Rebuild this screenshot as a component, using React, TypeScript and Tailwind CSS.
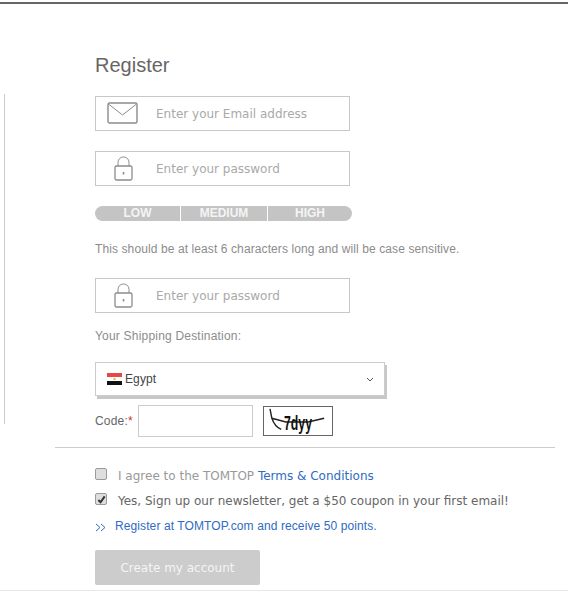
import React from "react";

// 入力欄（アイコン + プレースホルダー）
function Field({ icon, label, className }: { icon: React.ReactNode; label: string; className: string }) {
  return (
    <div className={`flex items-center w-[255px] h-[35px] border border-[#c8c8c8] ${className}`}>
      <div className="w-[60px] flex justify-center shrink-0">{icon}</div>
      <span className="text-[#a9a9a9] text-[12px] font-['DejaVu_Sans',sans-serif]">{label}</span>
    </div>
  );
}

function MailIcon() {
  return (
    <svg width="32" height="23" viewBox="0 0 32 23" fill="none" stroke="#8c8c8c" className="ml-[-6px]">
      <rect x="1" y="1" width="29" height="20" rx="1.5" strokeWidth="1.4" />
      <path d="M1.5 2 L15.5 13 L29.5 2" strokeWidth="1" />
    </svg>
  );
}

function LockIcon() {
  return (
    <svg width="20" height="25" viewBox="0 0 20 25" fill="none" stroke="#8c8c8c" className="ml-[-5px]">
      <rect x="1" y="10" width="17" height="14" rx="1.5" strokeWidth="1.3" />
      <path d="M4 10 V6.5 C4 3 6.5 1 9.5 1 C12.5 1 15 3 15 6.5 V10" strokeWidth="1" />
      <path d="M9.5 16 V18.5" strokeWidth="1.6" />
    </svg>
  );
}

function CheckBox({ checked }: { checked?: boolean }) {
  return (
    <span className="mb-[4px] flex items-center justify-center w-[12px] h-[12px] rounded-[2px] border border-[#9a9a9a] bg-[#dedede] shrink-0">
      {checked && (
        <svg width="9" height="9" viewBox="0 0 10 10" fill="none" stroke="#333" strokeWidth="2.2">
          <path d="M1.5 5.5 L4 8 L8.5 1.5" />
        </svg>
      )}
    </span>
  );
}

export default function App() {
  return (
    <div className="w-[568px] h-[605px] bg-white overflow-hidden font-['Liberation_Sans',Arial,sans-serif]">
      <div className="mt-[2px] h-[2px] bg-[#666]" />
      <div className="flex">
        {/* 左の縦線 */}
        <div className="ml-[4px] mt-[90px] w-px h-[330px] bg-[#ccc] shrink-0" />
        <div className="ml-[90px] flex-1">
          <h1 className="mt-[48px] text-[20px] leading-[26px] text-[#666]">Register</h1>
          <Field icon={<MailIcon />} label="Enter your Email address" className="mt-[18px]" />
          <Field icon={<LockIcon />} label="Enter your password" className="mt-[20px]" />

          {/* パスワード強度 */}
          <div className="mt-[20px] flex w-[257px] h-[15px] rounded-full overflow-hidden gap-px text-[#f4f4f4] text-[12px] font-bold leading-[15px] text-center">
            <div className="w-[85px] bg-[#c4c4c4]">LOW</div>
            <div className="w-[86px] bg-[#c4c4c4]">MEDIUM</div>
            <div className="flex-1 bg-[#c4c4c4]">HIGH</div>
          </div>

          <p className="mt-[20px] text-[12px] leading-[16px] text-[#8c8c8c] tracking-[0.1px]">
            This should be at least 6 characters long and will be case sensitive.
          </p>
          <Field icon={<LockIcon />} label="Enter your password" className="mt-[21px]" />
          <p className="mt-[15px] text-[12px] leading-[16px] text-[#8c8c8c] tracking-[0.2px]">Your Shipping Destination:</p>

          {/* 配送先 */}
          <div className="mt-[18px] flex items-center w-[290px] h-[34px] border border-[#ccc] shadow-[2px_3px_0_#c8c8c8] pl-[11px] pr-[10px]">
            <svg width="15" height="12" viewBox="0 0 15 12" className="mr-[3px]">
              <rect width="15" height="4" fill="#e8474a" />
              <rect y="4" width="15" height="4" fill="#fff" />
              <rect y="8" width="15" height="4" fill="#111" />
              <rect x="6.5" y="5" width="2" height="2" fill="#d9b84a" />
            </svg>
            <span className="text-[12px] text-[#444] tracking-[0.1px]">Egypt</span>
            <svg width="8" height="5" viewBox="0 0 8 5" fill="none" stroke="#555" className="ml-auto">
              <path d="M1 1 L4 4 L7 1" />
            </svg>
          </div>

          {/* 認証コード */}
          <div className="mt-[9px] flex items-center">
            <span className="text-[12px] text-[#666] w-[43px] tracking-[0.2px]">
              Code:<span className="text-[#c0392b]">*</span>
            </span>
            <div className="w-[115px] h-[32px] border border-[#ccc]" />
            <svg width="70" height="30" viewBox="0 0 70 30" className="ml-[10px] border border-[#666] box-border">
              <path d="M5 2 L7 12 Q10 21 17 24 M7 12 L22 16 L46 16 L63 12" fill="none" stroke="#222" strokeWidth="1.5" />
              <text x="20" y="25" fontSize="22" fontWeight="700" fontFamily="'Liberation Sans', sans-serif" fill="#111" textLength="30" lengthAdjust="spacingAndGlyphs">7dyy</text>
            </svg>
          </div>

          <div className="ml-[-40px] mt-[10px] w-[500px] h-px bg-[#ccc]" />

          <div className="mt-[20px] flex items-center gap-[11px] text-[12px] font-['DejaVu_Sans',sans-serif] leading-[16px] text-[#999]">
            <CheckBox />
            <span>
              I agree to the TOMTOP <span className="text-[#2f6bc4]">Terms &amp; Conditions</span>
            </span>
          </div>
          <div className="mt-[9px] flex items-center gap-[11px] text-[12px] font-['DejaVu_Sans',sans-serif] leading-[16px] text-[#666]">
            <CheckBox checked />
            <span>Yes, Sign up our newsletter, get a $50 coupon in your first email!</span>
          </div>
          <div className="mt-[9px] flex items-center text-[12px] leading-[16px] text-[#2f6bc4] tracking-[0.1px]">
            <svg width="20" height="9" viewBox="0 0 20 9" fill="none" stroke="#2f6bc4" className="mt-[2px] shrink-0">
              <path d="M1 1 L5 4.5 L1 8 M6 1 L10 4.5 L6 8" />
            </svg>
            <span>Register at TOMTOP.com and receive 50 points.</span>
          </div>

          <button className="mt-[16px] block w-[165px] h-[35px] rounded-[2px] bg-[#ccc] text-[#f4f4f4] text-[12px] font-['DejaVu_Sans',sans-serif]">
            Create my account
          </button>
        </div>
      </div>
      <div className="mt-[5px] h-px bg-[#e8e8e8]" />
    </div>
  );
}
